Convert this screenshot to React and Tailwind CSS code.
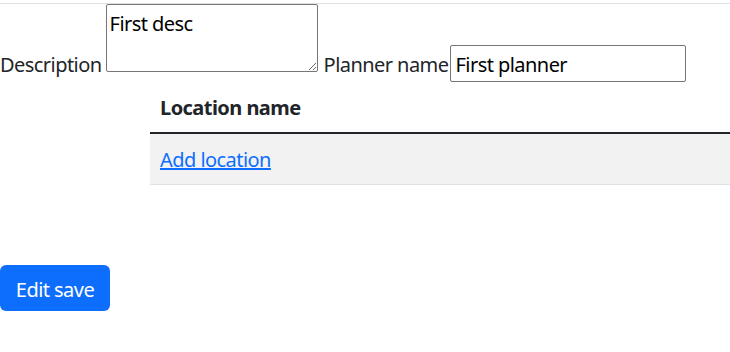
import React from 'react';

const App = () => {
    return (
        <div className="w-[730px] h-[352px] bg-white text-[#212529] text-[20px] leading-[30px] tracking-[-0.55px] overflow-hidden" style={{ fontFamily: '"Noto Sans", sans-serif' }}>
            {/* linea superior */}
            <div className="h-[4px] border-b border-[#dee2e6]"></div>

            <div className="flex items-start">
                <span className="mt-[46px] mr-[4px]">Description</span>
                <textarea
                    defaultValue="First desc"
                    className="w-[212px] h-[68px] border border-[#767676] rounded-[2px] px-[3px] pt-[6px] text-[20px] leading-[26px] tracking-[-0.55px] resize-y text-black"
                ></textarea>
                <span className="mt-[46px] ml-[6px] mr-[2px]">Planner name</span>
                <input
                    type="text"
                    defaultValue="First planner"
                    className="mt-[41px] w-[236px] h-[37px] border border-[#767676] rounded-[2px] px-[4px] pt-[2px] text-[20px] tracking-[-0.55px] text-black"
                />
            </div>

            {/* tabla de ubicaciones */}
            <div className="pl-[150px] mt-[2px]">
                <table className="w-full border-collapse">
                    <thead>
                        <tr className="border-b-2 border-[#212529]">
                            <th className="text-left font-bold px-[10px] py-[9px]">Location name</th>
                        </tr>
                    </thead>
                    <tbody>
                        <tr className="bg-[#f2f2f2] border-b border-[#dee2e6]">
                            <td className="px-[10px] pt-[11px] pb-[9px]">
                                <a href="#" className="text-[#0d6efd] underline">Add location</a>
                            </td>
                        </tr>
                    </tbody>
                </table>
            </div>

            <div className="mt-[80px]">
                <button className="bg-[#0d6efd] text-white rounded-[6px] w-[110px] h-[46px] pt-[3px] text-[20px] tracking-[-0.55px]">Edit save</button>
            </div>
        </div>
    );
};

export default App;
